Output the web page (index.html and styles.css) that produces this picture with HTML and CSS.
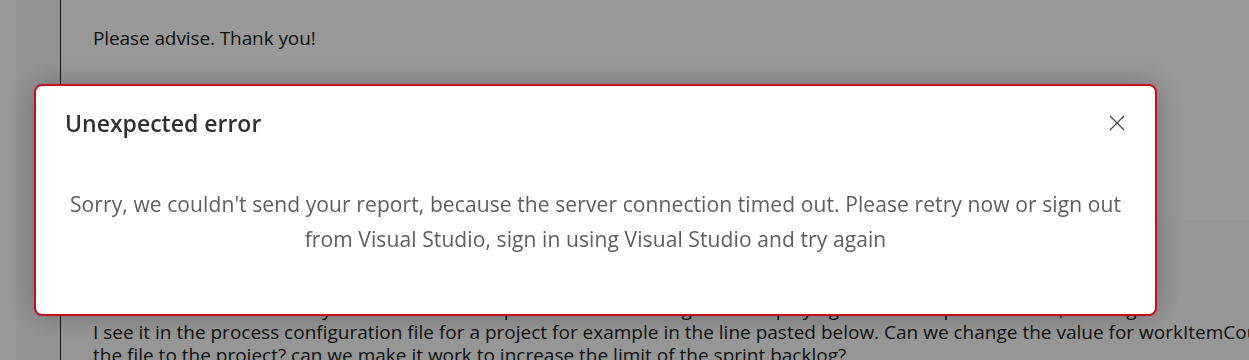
FILE: index.html
```html
<!DOCTYPE html>
<html lang="en">
<head>
  <meta charset="UTF-8" />
  <meta name="viewport" content="width=device-width, initial-scale=1.0" />
  <title>Problem report</title>
  <link rel="stylesheet" href="styles.css">
</head>
<body>
  <div class="page">
    <div class="edge"></div>
    <div class="rail"></div>
    <div class="thread">
      <div class="post">
        <p>Please advise. Thank you!</p>
      </div>
      <div class="post post-alt">
        <p>We have a team with many work items in the sprint and the backlog is not displaying all of them past the limit, reading<br>
        I see it in the process configuration file for a project for example in the line pasted below. Can we change the value for workItemCountLimit and import<br>
        the file to the project? can we make it work to increase the limit of the sprint backlog?</p>
      </div>
    </div>
  </div>

  <div class="overlay"></div>

  <div class="dialog" role="dialog">
    <div class="dialog-head">
      <h2>Unexpected error</h2>
      <button class="btn-close" aria-label="Close">
        <svg width="16" height="16" viewBox="0 0 16 16">
          <path d="M1 1 L15 15 M15 1 L1 15" stroke="#444" stroke-width="1.2" fill="none"/>
        </svg>
      </button>
    </div>
    <p class="dialog-msg">Sorry, we couldn't send your report, because the server connection timed out. Please retry now or sign out from Visual Studio, sign in using Visual Studio and try again</p>
  </div>
</body>
</html>
```

FILE: styles.css
```css
body {
  margin: 0;
  font-family: 'Open Sans', 'Noto Sans', sans-serif;
  background-color: white;
  overflow: hidden;
}
.page {
  display: flex;
  height: 360px;
}
.edge {
  flex-shrink: 0;
  width: 16px;
  background-color: #fff;
}
.rail {
  flex-shrink: 0;
  width: 44px;
  background-color: #f6f6f6;
  border-right: 1px solid #222;
}
.thread {
  flex: 1;
  min-width: 0;
  overflow: hidden;
  display: flex;
  flex-direction: column;
}
.post {
  flex-shrink: 0;
  height: 220px;
  padding: 0 32px;
}
.post p {
  margin: 25px 0 0;
  font-size: 19px;
  color: #1b1b1b;
  letter-spacing: -0.1px;
  white-space: nowrap;
}
.post-alt {
  flex: 1;
  height: auto;
  background-color: #fbfbfb;
}
.post-alt p {
  margin-top: 78px;
  letter-spacing: 0;
  line-height: 23px;
}
.overlay {
  position: fixed;
  inset: 0;
  background: rgba(0,0,0,0.4);
}
.dialog {
  position: fixed;
  left: 34px;
  top: 84px;
  width: 1119px;
  height: 228px;
  background: white;
  border: 2px solid #c50f1f;
  border-radius: 8px;
  box-shadow: 0 0 30px rgba(0,0,0,0.28);
}
.dialog-head {
  display: flex;
  justify-content: space-between;
  align-items: center;
  padding: 21px 30px 0 29px;
}
.dialog-head h2 {
  margin: 0;
  font-size: 23px;
  font-weight: 600;
  color: #323130;
}
.btn-close {
  border: none;
  background: none;
  padding: 0;
  width: 16px;
  height: 16px;
  cursor: pointer;
}
.dialog-msg {
  margin: 48px 28px 0;
  text-align: center;
  font-size: 21px;
  letter-spacing: 0.1px;
  line-height: 35px;
  color: #605e5c;
}
```
